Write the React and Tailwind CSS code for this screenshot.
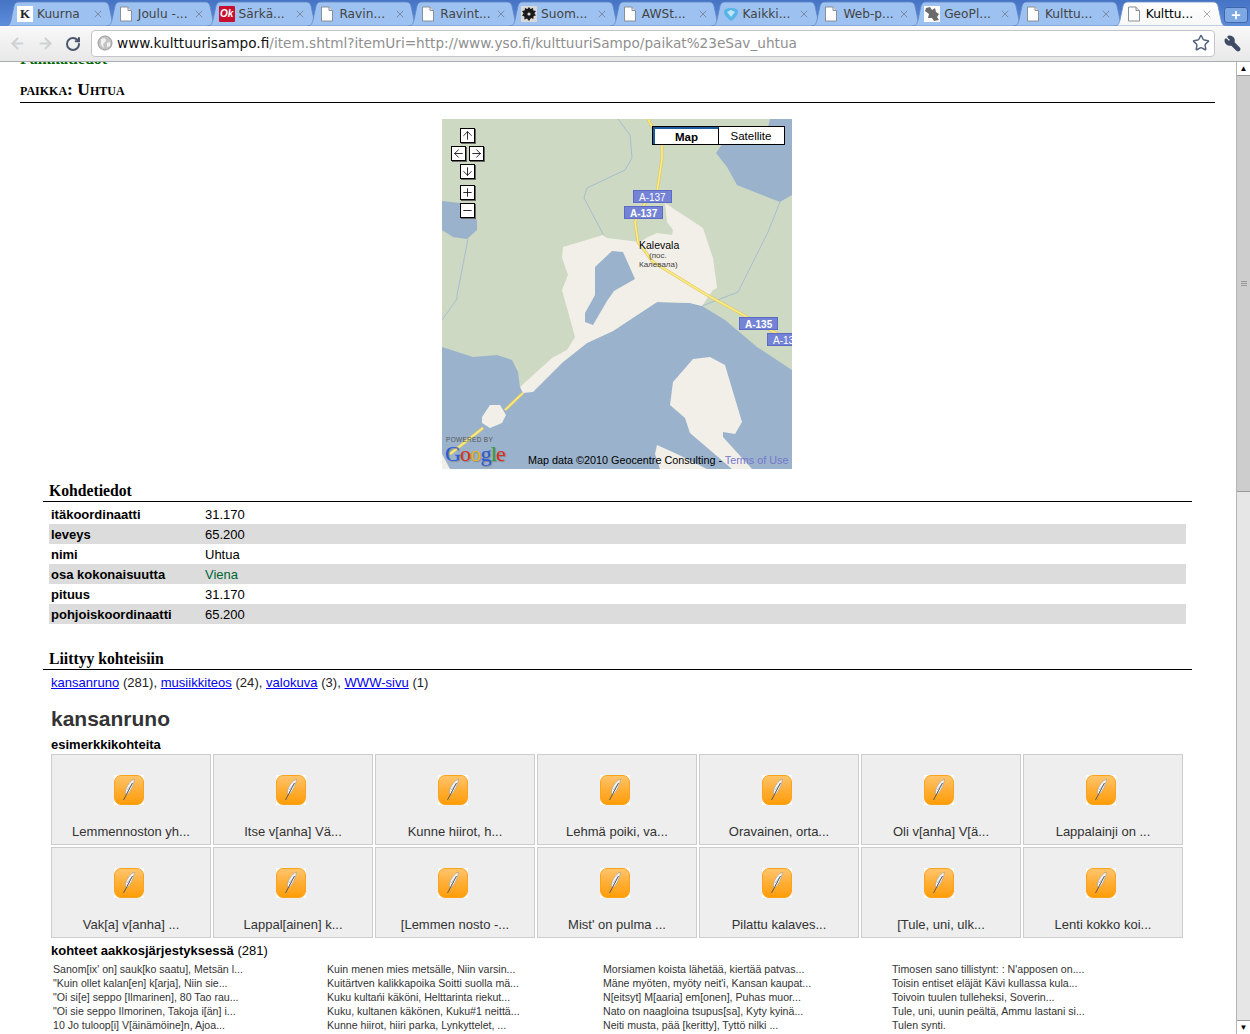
import React from 'react';
import { ArrowLeft, ArrowRight, ArrowUp, ArrowDown, Plus, Minus, RotateCw, Star, Wrench, X } from 'lucide-react';

const DocIcon = () => (
  <svg width="16" height="16" viewBox="0 0 16 16" className="shrink-0">
    <path d="M2.5 1 H10 L13.5 4.5 V15 H2.5 Z" fill="#fff" stroke="#8a8f96" />
    <path d="M10 1 V4.5 H13.5" fill="#e4e6ea" stroke="#8a8f96" />
  </svg>
);

const KIcon = () => (
  <div className="w-4 h-4 bg-white flex items-center justify-center shrink-0 text-[13px] leading-4 font-bold font-['Liberation_Serif',serif] text-[#222]">K</div>
);

const OkIcon = () => (
  <div className="w-4 h-4 bg-[#c8102e] flex items-center justify-center shrink-0 rounded-[1px] text-[10px] leading-4 font-bold italic text-white">Ok</div>
);

const GearIcon = () => (
  <svg width="16" height="16" viewBox="0 0 16 16" className="shrink-0">
    <rect width="16" height="16" fill="#d8d8d8" />
    <path d="M8 1 L9.5 3 L12 2 L12.3 4.4 L15 5 L13.4 7.2 L15 9.5 L12.6 10 L12.4 13 L10 12 L8 15 L6 12.4 L3.4 13.4 L3.4 10.6 L1 9.5 L2.6 7.4 L1 5 L3.6 4.6 L4 2 L6.4 3 Z" fill="#1a1a1a" />
    <circle cx="8" cy="8" r="1.6" fill="#d8d8d8" />
  </svg>
);

const GemIcon = () => (
  <svg width="16" height="16" viewBox="0 0 16 16" className="shrink-0">
    <path d="M1 6 C1 3 4 2 8 2 C12 2 15 3 15 6 C15 9 11 13 8 15 C5 13 1 9 1 6 Z" fill="#58b4e6" />
    <path d="M4 6 L8 4 L12 6 L8 11 Z" fill="#bfe6f8" />
  </svg>
);

const GeoIcon = () => (
  <svg width="16" height="16" viewBox="0 0 16 16" className="shrink-0">
    <rect width="16" height="16" fill="#fff" />
    <path d="M2 2 L6 1 L8 4 L11 2 L12 6 L15 8 L13 11 L15 14 L10 15 L8 12 L4 12 L5 8 L1 5 Z" fill="#6b6b6b" />
  </svg>
);

const tabs = [
  { title: 'Kuurna', icon: <KIcon /> },
  { title: 'Joulu -...', icon: <DocIcon /> },
  { title: 'Särkä...', icon: <OkIcon /> },
  { title: 'Ravin...', icon: <DocIcon /> },
  { title: 'Ravint...', icon: <DocIcon /> },
  { title: 'Suom...', icon: <GearIcon /> },
  { title: 'AWSt...', icon: <DocIcon /> },
  { title: 'Kaikki...', icon: <GemIcon /> },
  { title: 'Web-p...', icon: <DocIcon /> },
  { title: 'GeoPl...', icon: <GeoIcon /> },
  { title: 'Kulttu...', icon: <DocIcon /> },
  { title: 'Kulttu...', icon: <DocIcon />, active: true },
];

const details = [
  ['itäkoordinaatti', '31.170'],
  ['leveys', '65.200'],
  ['nimi', 'Uhtua'],
  ['osa kokonaisuutta', 'Viena'],
  ['pituus', '31.170'],
  ['pohjoiskoordinaatti', '65.200'],
];

const tiles = [
  'Lemmennoston yh...', 'Itse v[anha] Vä...', 'Kunne hiirot, h...', 'Lehmä poiki, va...', 'Oravainen, orta...', 'Oli v[anha] V[ä...', 'Lappalainji on ...',
  'Vak[a] v[anha] ...', 'Lappal[ainen] k...', '[Lemmen nosto -...', "Mist' on pulma ...", 'Pilattu kalaves...', '[Tule, uni, ulk...', 'Lenti kokko koi...',
];

const lists = [
  ['Sanom[ix\' on] sauk[ko saatu], Metsän l...', '"Kuin ollet kalan[en] k[arja], Niin sie...', '"Oi si[e] seppo [Ilmarinen], 80 Tao rau...', '"Oi sie seppo Ilmorinen, Takoja i[än] i...', '10 Jo tuloop[i] V[äinämöine]n, Ajoa...'],
  ['Kuin menen mies metsälle, Niin varsin...', 'Kuitärtven kalikkapoika Soitti suolla mä...', 'Kuku kultańi käköni, Helttarinta riekut...', 'Kuku, kultanen käkönen, Kuku#1 neittä...', 'Kunne hiirot, hiiri parka, Lynkyttelet, ...'],
  ['Morsiamen koista lähetää, kiertää patvas...', "Mäne myöten, myöty neit'i, Kansan kaupat...", 'N[eitsyt] M[aaria] em[onen], Puhas muor...', 'Nato on naagloina tsupus[sa], Kyty kyinä...', 'Neiti musta, pää [keritty], Tyttö nilki ...'],
  ["Timosen sano tillistynt: : N'apposen on....", 'Toisin entiset eläjät Kävi kullassa kula...', 'Toivoin tuulen tulleheksi, Soverin...', 'Tule, uni, uunin peältä, Ammu lastani si...', 'Tulen synti.'],
];

function Tab({ title, icon, active }) {
  return (
    <div className={`relative w-[100.8px] h-[26px] shrink-0 ${active ? 'z-10' : ''}`}>
      <svg width="113" height="26" viewBox="0 0 113 26" className="absolute left-0 top-0">
        <path
          d="M0.5 26 C4 26 5 24 6 20 L9 6 C10 3 11 2 14 2 H99 C102 2 103 3 104 6 L107 20 C108 24 109 26 112.5 26 Z"
          fill={active ? 'url(#tabActive)' : '#9dc2f1'}
          stroke={active ? '#6d8fc4' : '#5f86c4'}
          strokeWidth="0.8"
        />
      </svg>
      <div className="absolute left-[12px] top-[6px] flex items-center">
        {icon}
        <span className={`ml-1 text-[12.2px] leading-4 font-['DejaVu_Sans',sans-serif] whitespace-nowrap ${active ? 'text-black' : 'text-[#444]'}`}>{title}</span>
      </div>
      <X size={12} strokeWidth={2} className={`absolute left-[87px] top-[8px] ${active ? 'text-[#aaa]' : 'text-[#7b8aa5]'}`} />
    </div>
  );
}

function TabStrip() {
  return (
    <div className="relative h-[26px] pl-[5px] flex bg-gradient-to-b from-[#4673c4] to-[#5c8ddb] overflow-hidden">
      <svg width="0" height="0" className="absolute">
        <defs>
          <linearGradient id="tabActive" x1="0" y1="0" x2="0" y2="1">
            <stop offset="0" stopColor="#ffffff" />
            <stop offset="1" stopColor="#f7f7f7" />
          </linearGradient>
        </defs>
      </svg>
      {tabs.map((t, i) => (
        <Tab key={i} {...t} />
      ))}
      <div className="absolute left-[1224px] top-[7px] w-[24px] h-[16px] -skew-x-[14px] rounded-[3px] bg-[#7ea8e4] border border-[#3f66aa] flex items-center justify-center">
        <Plus size={12} strokeWidth={3.5} className="text-white skew-x-[14px]" />
      </div>
    </div>
  );
}

function Toolbar() {
  return (
    <div className="h-[36px] flex items-center bg-gradient-to-b from-[#f9f9f9] to-[#e8e8e8] border-b border-[#a8adb3]">
      <div className="w-[91px] pl-[9px] flex items-center shrink-0">
        <ArrowLeft size={17} strokeWidth={3} className="text-[#cfd1d5]" />
        <ArrowRight size={17} strokeWidth={3} className="ml-[11px] text-[#cfd1d5]" />
        <RotateCw size={16} strokeWidth={3} className="ml-[11px] text-[#4c566a]" />
      </div>
      <div className="w-[1124px] h-[27px] -mt-[1px] bg-white border border-[#c4c5cb] rounded-[4px] flex items-center pl-[5px] pr-[4px] font-['DejaVu_Sans',sans-serif] text-[13.65px]">
        <svg width="16" height="16" viewBox="0 0 16 16" className="shrink-0">
          <circle cx="8" cy="8" r="7" fill="#c4c4c4" stroke="#9a9a9a" />
          <path d="M4 4 L8 3 L9 6 L6 9 L7 13 L4 10 Z M10 8 L13 7 L13 11 L10 12 Z" fill="#f2f2f2" />
        </svg>
        <span className="ml-[4px] whitespace-nowrap text-[#111]">www.kulttuurisampo.fi</span>
        <span className="whitespace-nowrap text-[#8f8f8f]">/item.shtml?itemUri=http://www.yso.fi/kulttuuriSampo/paikat%23eSav_uhtua</span>
        <Star size={18} strokeWidth={2} className="ml-auto text-[#55637d]" />
      </div>
      <Wrench size={17} strokeWidth={2.5} className="ml-[9px] text-[#3f4c66] fill-[#3f4c66] -scale-x-100" />
    </div>
  );
}

function MapButton({ icon: Icon, className }) {
  return (
    <div className={`absolute w-[15px] h-[15px] bg-white border border-black shadow-[1px_1px_0_#666] flex items-center justify-center ${className}`}>
      <Icon size={13} strokeWidth={1.5} className="text-black" />
    </div>
  );
}

function Shield({ children, bold, className }) {
  return (
    <div className={`absolute h-[13px] px-[5px] bg-[#7483d6] border border-[#5c6bc6] text-white text-[10px] leading-[13px] whitespace-nowrap ${bold ? 'font-bold' : ''} ${className}`}>
      {children}
    </div>
  );
}

function UhtuaMap() {
  return (
    <div className="relative w-[350px] h-[350px] overflow-hidden bg-[#cdd9c3] text-black">
      <svg width="350" height="350" viewBox="0 0 350 350" className="absolute left-0 top-0">
        <path d="M328 0 L326 8 L318 14 L298 18 L281 24 L274 34 L285 48 L295 66 L315 74 L338 83 L350 76 L350 0 Z" fill="#9ab2cc" />
        <path d="M0 82 L18 84 L35 101 L35 111 L25 120 L11 118 L0 111 Z" fill="#9ab2cc" />
        <g fill="none" stroke="#a8bdd0" strokeWidth="1">
          <path d="M176 0 L188 16 L190 39 L183 51 L145 69 L142 79 L170 132" />
          <path d="M338 83 L326 113 L296 173 L260 187" />
          <path d="M26 120 L15 176 L15 180 L0 201" />
          <path d="M195 171 L208 184" />
        </g>
        {/* water and the town's land */}
        <path d="M0 228 L31 238 L55 236 L70 241 L76 253 L78 268 L121 243 L145 224 L171 212 L215 183 L248 184 L260 187 L283 201 L315 228 L350 251 L350 350 L0 350 Z" fill="#9ab2cc" />
        <path d="M223 84 L261 109 L271 139 L275 169 L271 171 L260 187 L248 184 L215 183 L171 212 L145 224 L121 243 L91 273 L81 274 L78 268 L110 239 L125 231 L133 218 L120 171 L126 156 L120 139 L121 128 L161 116 L165 119 L198 123 L206 118 L215 114 L230 116 L231 111 L225 103 Z" fill="#f2efe9" />
        <path d="M170 132 L181 133 L193 160 L172 172 L165 182 L151 206 L143 203 L143 194 L153 176 L153 148 Z" fill="#9ab2cc" />
        <path d="M40 298 L48 286 L58 286 L64 296 L60 304 L48 309 L40 304 Z" fill="#f2efe9" />
        <path d="M251 240 L268 238 L283 246 L300 303 L293 315 L281 313 L281 318 L310 350 L290 350 L248 314 L243 299 L228 286 L231 263 Z" fill="#f2efe9" />
        <path d="M215 326 L235 335 L265 350 L218 350 L213 335 Z" fill="#f2efe9" />
        <path d="M0 335 L8 350 L0 350 Z" fill="#f2efe9" />
        <g fill="none" strokeLinejoin="round">
          <path d="M206 0 L220 26 L220 40 L215 73 L203 84 L193 103 L196 123 L211 143 L265 176 L305 198 L350 223" stroke="#dcc96a" strokeWidth="3" />
          <path d="M206 0 L220 26 L220 40 L215 73 L203 84 L193 103 L196 123 L211 143 L265 176 L305 198 L350 223" stroke="#fdeb80" strokeWidth="1.6" />
          <path d="M81 274 L63 291 M41 309 L8 335" stroke="#dcc96a" strokeWidth="3" />
          <path d="M81 274 L63 291 M41 309 L8 335" stroke="#fdeb80" strokeWidth="1.6" />
        </g>
      </svg>

      <MapButton icon={ArrowUp} className="left-[18px] top-[9px]" />
      <MapButton icon={ArrowLeft} className="left-[9px] top-[27px]" />
      <MapButton icon={ArrowRight} className="left-[27px] top-[27px]" />
      <MapButton icon={ArrowDown} className="left-[18px] top-[45px]" />
      <MapButton icon={Plus} className="left-[18px] top-[66px]" />
      <MapButton icon={Minus} className="left-[18px] top-[84px]" />

      <div className="absolute left-[210px] top-[7px] w-[133px] h-[19px] flex bg-white border border-black text-[11.5px] leading-[19px] text-center">
        <div className="w-[66px] text-[11.5px] font-bold border-r border-black border-t-2 border-l-2 border-t-[#1c5c9c] border-l-[#1c5c9c] leading-[16px]">Map</div>
        <div className="flex-1 pr-[1px]">Satellite</div>
      </div>

      <Shield className="left-[191px] top-[71px]">A-137</Shield>
      <Shield bold className="left-[182px] top-[87px]">A-137</Shield>
      <Shield bold className="left-[297px] top-[198px]">A-135</Shield>
      <Shield className="left-[325px] top-[214px]">A-135</Shield>

      <div className="absolute left-[197px] top-[120px] text-[10.5px] leading-[13px] [text-shadow:0_0_2px_#fff]">Kalevala</div>
      <div className="absolute left-[207px] top-[132px] text-[8px] leading-[10px] text-[#444]">(пос.</div>
      <div className="absolute left-[197px] top-[141px] text-[8px] leading-[10px] text-[#444]">Калевала)</div>

      <div className="absolute left-[4px] top-[317px] text-[6.5px] leading-[8px] tracking-[0.3px] text-[#555]">POWERED BY</div>
      <div className="absolute left-[3px] top-[323px] text-[22px] leading-[24px] font-['Liberation_Serif',serif] tracking-[-0.8px] [text-shadow:1px_1px_1px_#888]">
        <span className="text-[#2a5bd7]">G</span>
        <span className="text-[#d8301f]">o</span>
        <span className="text-[#e8b417]">o</span>
        <span className="text-[#2a5bd7]">g</span>
        <span className="text-[#2f9e3a]">l</span>
        <span className="text-[#d8301f]">e</span>
      </div>
      <div className="absolute left-[86px] top-[335px] text-[10.8px] leading-[13px] whitespace-nowrap">
        Map data ©2010 Geocentre Consulting - <span className="text-[#7777cc]">Terms of Use</span>
      </div>
    </div>
  );
}

function FeatherIcon() {
  return (
    <div className="w-[30px] h-[30px] mr-[4px] shrink-0 bg-white">
      <div className="w-full h-full rounded-[7px] bg-gradient-to-b from-[#ffc46a] via-[#ffae33] to-[#ff9d00] border border-[#fba31b] flex items-center justify-center">
        <svg width="28" height="28" viewBox="0 0 28 28">
          <path d="M19.5 3 C15 5 11.5 10 10.5 15 C10.2 17 10.6 18.5 11.5 18.5 C15 17 18.5 10 19.5 3 Z" fill="#f4f4f4" stroke="#9a9a9a" strokeWidth="0.6" />
          <path d="M17 8 L12 14 M15 13 L12 16" stroke="#b0b0b0" strokeWidth="0.7" fill="none" />
          <path d="M17.5 7 L8.5 24" stroke="#5a5a5a" strokeWidth="1" fill="none" />
        </svg>
      </div>
    </div>
  );
}

function SectionTitle({ children, className }) {
  return (
    <h2 className={`pl-[6px] border-b border-black text-[15.7px] leading-5 font-bold text-black font-['Liberation_Serif',serif] ${className}`}>
      {children}
    </h2>
  );
}

function Scrollbar() {
  return (
    <div className="w-[14px] shrink-0 flex flex-col bg-[#e6e6e6] border-l border-[#b5b5b5]">
      <div className="h-[14px] bg-white border-b border-[#999] flex items-center justify-center text-[8px] leading-none text-black">▲</div>
      <div className="h-[416px] bg-[#cdcdcd] border-b border-[#999] flex flex-col items-center justify-center gap-[1px]">
        <div className="w-[6px] h-[1px] bg-[#999]" />
        <div className="w-[6px] h-[1px] bg-[#999]" />
        <div className="w-[6px] h-[1px] bg-[#999]" />
      </div>
      <div className="flex-1" />
      <div className="h-[14px] bg-white border-t border-[#999] flex items-center justify-center text-[8px] leading-none text-black">▼</div>
    </div>
  );
}

export default function App() {
  return (
    <div className="w-[1250px] h-[1034px] overflow-hidden flex flex-col bg-white font-['Liberation_Sans',Arial,sans-serif]">
      <TabStrip />
      <Toolbar />
      <div className="flex-1 flex min-h-0">
        <main className="flex-1 min-w-0 overflow-hidden pl-[20px] pr-[21px] text-[13px] text-[#222]">
          <div className="h-[4px] flex items-end overflow-hidden">
            <div className="shrink-0 -mb-[3px] text-[16px] leading-5 font-bold text-[#006600] font-['Liberation_Serif',serif]">Paikkatiedot</div>
          </div>
          <h1 className="mt-[13px] pb-[3px] border-b border-black text-[17.5px] leading-5 font-bold text-black font-['Liberation_Serif',serif] [font-variant:small-caps]">paikka: Uhtua</h1>

          <div className="mt-[16px] pr-[1px] flex justify-center">
            <UhtuaMap />
          </div>

          <div className="mx-[23px]">
            <SectionTitle className="mt-[12px]">Kohdetiedot</SectionTitle>
            <div className="mt-[2px] mx-[6px]">
              {details.map(([label, value], i) => (
                <div key={label} className={`h-5 pt-[1px] flex items-center px-[2px] leading-5 text-black ${i % 2 ? 'bg-[#dcdcdc]' : ''}`}>
                  <div className="w-[154px] font-bold shrink-0">{label}</div>
                  <div className={label === 'osa kokonaisuutta' ? 'text-[#006633]' : ''}>{value}</div>
                </div>
              ))}
            </div>

            <SectionTitle className="mt-[25px]">Liittyy kohteisiin</SectionTitle>
            <p className="mt-[3px] ml-[8px] leading-5 tracking-[0.03px]">
              <a href="#" className="text-[#0000ee] underline">kansanruno</a> (281),{' '}
              <a href="#" className="text-[#0000ee] underline">musiikkiteos</a> (24),{' '}
              <a href="#" className="text-[#0000ee] underline">valokuva</a> (3),{' '}
              <a href="#" className="text-[#0000ee] underline">WWW-sivu</a> (1)
            </p>

            <div className="ml-[8px]">
              <h2 className="mt-[12px] text-[21px] leading-7 font-bold text-[#333]">kansanruno</h2>
              <div className="mt-[4px] font-bold leading-4 text-[13px] text-black">esimerkkikohteita</div>
              <div className="mt-[1px] grid grid-cols-[repeat(7,160px)] gap-[2px]">
                {tiles.map((t) => (
                  <div key={t} className="h-[91px] bg-[#eeeeee] border border-[#cccccc] pt-[20px] flex flex-col items-center">
                    <FeatherIcon />
                    <div className="mt-[19px] leading-4 text-[#333] whitespace-nowrap">{t}</div>
                  </div>
                ))}
              </div>
              <div className="mt-[5px] leading-4 text-[13px] text-black">
                <span className="font-bold">kohteet aakkosjärjestyksessä</span> (281)
              </div>
              <div className="mt-[3px] ml-[2px] grid grid-cols-[274px_276px_289px_1fr] text-[10.6px] leading-[14px] text-[#333]">
                {lists.map((col, i) => (
                  <div key={i}>
                    {col.map((line) => (
                      <div key={line} className="whitespace-nowrap">{line}</div>
                    ))}
                  </div>
                ))}
              </div>
            </div>
          </div>
        </main>
        <Scrollbar />
      </div>
    </div>
  );
}
